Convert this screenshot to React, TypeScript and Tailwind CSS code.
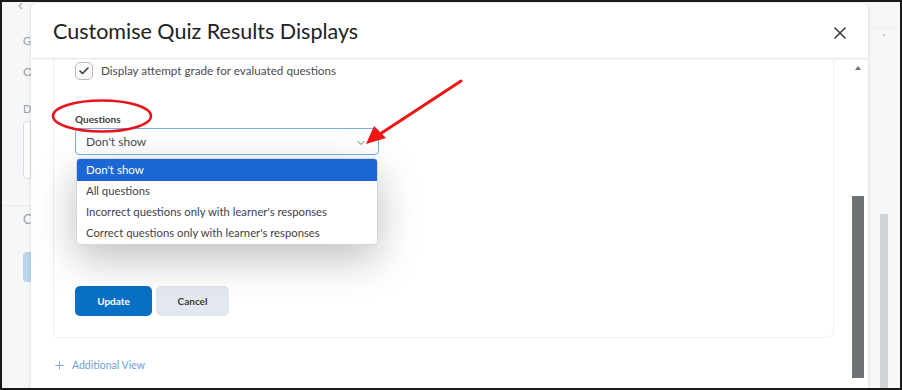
import React from "react";
import { X, ChevronDown, Check, Plus } from "lucide-react";

const options = [
  "Don't show",
  "All questions",
  "Incorrect questions only with learner's responses",
  "Correct questions only with learner's responses",
];

export default function App() {
  return (
    <div
      className="relative w-[902px] h-[390px] overflow-hidden border-2 border-[#1a1a1a] bg-[#f6f7f9] text-[#494c4e]"
      style={{ fontFamily: "Lato, 'Open Sans', sans-serif" }}
    >
      {/* page behind the dialog */}
      <div className="flex h-full">
        <div className="w-[29px] flex flex-col text-[11px] text-[#9aa0a6] pl-[21px]">
          <svg width="8" height="8" viewBox="0 0 8 8" className="-ml-[6px] mt-[1px]">
            <path d="M5 0 L2 3 L5 6" fill="none" stroke="#b0b5ba" strokeWidth="1.4" />
          </svg>
          <span className="mt-[22px]">G</span>
          <span className="mt-[13px] text-[12px]">O</span>
          <span className="mt-[20px]">D</span>
          <div className="mt-[4px] h-[58px] border border-[#d8dce0] rounded-l bg-white" />
          <div className="mt-[26px] -ml-[21px] h-px bg-[#e8eaed]" />
          <span className="mt-[4px] text-[13px]">C</span>
          <div className="mt-[22px] h-[30px] rounded-l bg-[#b9d4ec]" />
        </div>
        <div className="flex-1" />
        <div className="w-[32px] flex flex-col items-center">
          <div className="w-full h-px bg-[#eceef1] mt-[26px]" />
          <div className="w-[2px] h-[2px] bg-[#c4c8cc] mt-[5px]" />
          <div className="w-[8px] flex-1 mt-[178px] bg-[#d2d5d8]" />
        </div>
      </div>

      {/* dialog */}
      <div className="absolute left-[29px] top-[1px] w-[837px] h-[400px] bg-white rounded-t-[6px] shadow-[0_0_4px_rgba(0,0,0,0.12)] flex flex-col">
        <div className="h-[56px] flex items-center justify-between pl-[22px] pr-[18px] border-b border-[#e6e8eb] shadow-[0_1px_2px_rgba(0,0,0,0.04)]">
          <h1 className="text-[21.5px] text-[#202122] mt-[2px]">Customise Quiz Results Displays</h1>
          <X size={20} strokeWidth={2} className="text-[#3c3f42] mt-[4px]" />
        </div>

        <div className="flex flex-1 min-h-0">
          <div className="flex-1 pl-[22px] pr-[15px]">
            <div className="relative border-x border-b border-[#eef0f2] rounded-b-[6px] pl-[21px] pt-[3px] pb-[21px]">
              <div className="flex items-center gap-[8px]">
                <div className="w-[18px] h-[18px] rounded-[5px] border border-[#b7bcc2] bg-[#f9fafb] flex items-center justify-center">
                  <Check size={12} strokeWidth={3.2} className="text-[#3a3d40]" />
                </div>
                <span className="text-[11.7px]">Display attempt grade for evaluated questions</span>
              </div>

              <div className="mt-[32px] text-[10px] font-bold text-[#3e4144]">Questions</div>
              <div className="relative mt-[1px] w-[304px]">
                <div className="h-[27px] border-[1.5px] border-[#79b0e2] rounded-[4px] flex items-center justify-between pl-[10px] pr-[11px]">
                  <span className="text-[12px]">Don&apos;t show</span>
                  <ChevronDown size={12} strokeWidth={2} className="text-[#6b6f73] mt-[2px]" />
                </div>
                <div className="absolute left-[1px] top-[30px] w-[302px] bg-white rounded-[4px] border border-[#d3d7db] shadow-[0_14px_40px_rgba(0,0,0,0.25)] overflow-hidden z-10">
                  {options.map((o, i) => (
                    <div
                      key={o}
                      className={
                        i === 0
                          ? "h-[22px] flex items-center pl-[9px] text-[11.5px] bg-[#1b67d3] text-white"
                          : "h-[21px] flex items-center pl-[9px] text-[11.3px] text-[#3f4246]"
                      }
                    >
                      {o}
                    </div>
                  ))}
                </div>
              </div>

              <div className="h-[131px]" />

              <div className="flex gap-[4px]">
                <button className="w-[77px] h-[30px] rounded-[5px] bg-[#0870c4] text-white text-[10px] font-bold">Update</button>
                <button className="w-[73px] h-[30px] rounded-[5px] bg-[#e3e8ef] text-[#3a3d40] text-[10px] font-bold">Cancel</button>
              </div>
            </div>

            <div className="mt-[20px] flex items-center gap-[6px] text-[10.5px] text-[#6ba2d6]">
              <Plus size={13} strokeWidth={1.6} />
              <span>Additional View</span>
            </div>
          </div>

          {/* scrollbar */}
          <div className="w-[17px] flex flex-col items-center pt-[7px] mr-[2px]">
            <div className="w-0 h-0 border-l-[3px] border-r-[3px] border-b-[4px] border-l-transparent border-r-transparent border-b-[#6d7275]" />
            <div className="w-[12px] h-[182px] mt-[126px] bg-[#6d7275]" />
          </div>
        </div>
      </div>

      {/* annotation */}
      <svg className="absolute inset-0 pointer-events-none" width="902" height="390">
        <ellipse cx="100" cy="114" rx="49" ry="15.5" fill="none" stroke="#e8141b" strokeWidth="2.5" />
        <line x1="459" y1="79" x2="378" y2="132" stroke="#f01616" strokeWidth="3" strokeLinecap="round" />
        <polygon points="364,142 372,124 384,136" fill="#f01616" />
      </svg>
    </div>
  );
}
